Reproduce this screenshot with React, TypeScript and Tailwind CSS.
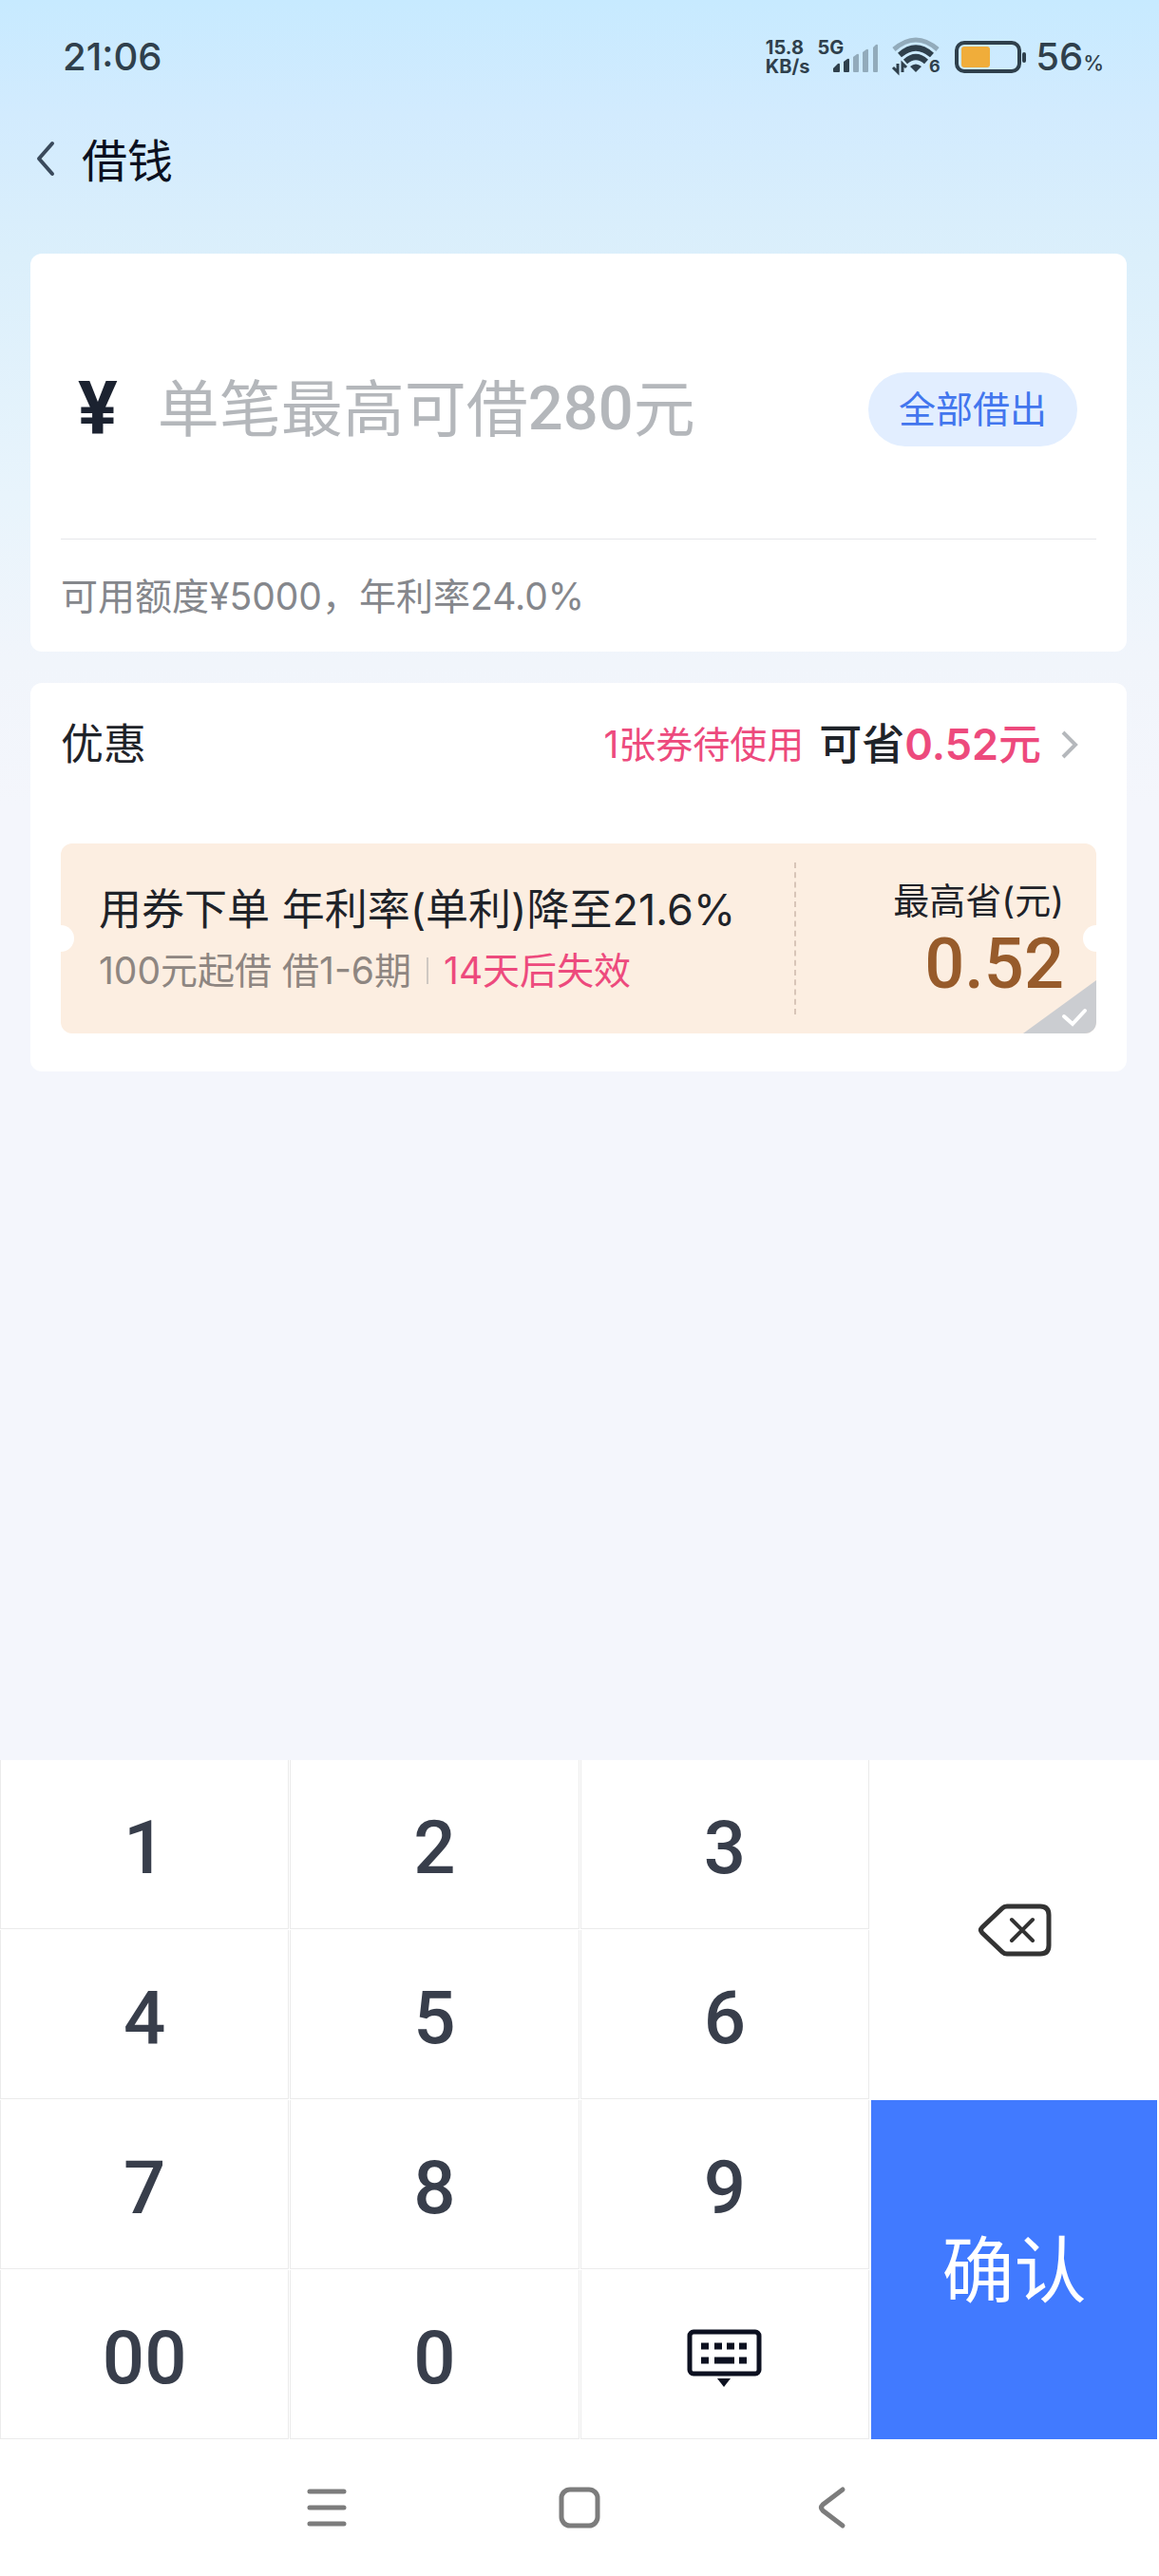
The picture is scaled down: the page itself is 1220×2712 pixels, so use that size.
import { ReactNode, useState } from 'react';

const KEYS = ['1', '2', '3', '4', '5', '6', '7', '8', '9', '00', '0'];

function SignalIcon() {
  return (
    <svg width="50" height="34" viewBox="0 0 50 34" aria-hidden="true">
      <path d="M1 32v-3l5-5q2-1 2 1v7q0 1-1 1H2q-1 0-1-1z" fill="#2f404c" />
      <path d="M12 32V22l4-3q2-1 2 1v12q0 1-1 1h-4q-1 0-1-1z" fill="#2f404c" />
      <path d="M22 32V17l4-3q2-1 2 1v17q0 1-1 1h-4q-1 0-1-1z" fill="#92abbb" />
      <path d="M32 32V12l4-3q2-1 2 1v22q0 1-1 1h-4q-1 0-1-1z" fill="#92abbb" />
      <path d="M43 32V7l3-3q2-1 2 1v27q0 1-1 1h-3q-1 0-1-1z" fill="#92abbb" />
    </svg>
  );
}

function WifiIcon() {
  return (
    <svg width="54" height="44" viewBox="0 0 54 44" fill="none" aria-hidden="true">
      <path d="M3 14Q26 -6 49 14" stroke="#92abbb" strokeWidth="5" />
      <path d="M9 20Q26 5 43 20" stroke="#2f404c" strokeWidth="6" />
      <path d="M15 27Q26 17 37 27" stroke="#2f404c" strokeWidth="6" />
      <path d="M20 32q6-5 12 0l-6 6z" fill="#2f404c" />
      <path d="M7 29v9l-5-5M12 38v-9l4 4" stroke="#2f404c" strokeWidth="3" />
      <text x="40" y="38" fontSize="18" fontWeight="700" fontFamily="Inter, sans-serif" fill="#2f404c">6</text>
    </svg>
  );
}

function BatteryIcon() {
  return (
    <svg width="78" height="34" viewBox="0 0 78 34" fill="none" aria-hidden="true">
      <rect x="3" y="2" width="66" height="30" rx="8" stroke="#2f404c" strokeWidth="4" />
      <rect x="8" y="6" width="30" height="22" rx="3" fill="#f0ad3a" />
      <rect x="72" y="12" width="4" height="11" rx="2" fill="#2f404c" />
    </svg>
  );
}

function StatusBar() {
  return (
    <div className="flex h-[120px] items-center justify-between pr-[58px] pl-[66px] font-[Inter,sans-serif] text-[#2f404c]">
      <span className="text-[40px] leading-none font-medium">21:06</span>
      <div className="flex items-center">
        <div className="flex items-start">
          <div className="text-[20px] leading-5 font-bold">
            <div>15.8</div>
            <div>KB/s</div>
          </div>
          <span className="ml-2 text-[20px] leading-5 font-bold">5G</span>
        </div>
        <div className="-ml-3">
          <SignalIcon />
        </div>
        <div className="ml-3">
          <WifiIcon />
        </div>
        <div className="ml-3">
          <BatteryIcon />
        </div>
        <div className="ml-2 flex items-baseline leading-none font-medium">
          <span className="text-[40px]">56</span>
          <span className="text-[22px]">%</span>
        </div>
      </div>
    </div>
  );
}

function Header() {
  return (
    <header className="flex h-[99px] items-center pl-[38px]">
      <button type="button" aria-label="返回" className="pb-1">
        <svg width="20" height="40" viewBox="0 0 20 40" fill="none" aria-hidden="true">
          <path d="M17 3L3 19L17 35" stroke="#3a4a5c" strokeWidth="4" strokeLinecap="round" strokeLinejoin="round" />
        </svg>
      </button>
      <h1 className="ml-7 text-[48px] leading-none text-[#0b1020]">借钱</h1>
    </header>
  );
}

function AmountCard() {
  const [amount, setAmount] = useState('');

  return (
    <section className="rounded-xl bg-white px-8">
      <div className="flex h-[301px] items-center border-b border-[#e6e7ea] pt-7 pr-5 pl-[18px]">
        <span className="font-[Roboto,sans-serif] text-[78px] leading-none font-bold text-[#1b2230]">¥</span>
        <div className="relative ml-[42px] flex-1">
          <input
            id="amount"
            inputMode="numeric"
            value={amount}
            onChange={(e) => setAmount(e.target.value)}
            className="block h-24 w-full text-[65px] focus:outline-none"
          />
          {amount === '' && (
            <label htmlFor="amount" className="absolute inset-0 flex items-center text-[65px] whitespace-nowrap text-[#b4b7bb]">
              单笔最高可借
              <span className="font-[Roboto,sans-serif] font-medium">280</span>
              元
            </label>
          )}
        </div>
        <button type="button" className="h-[78px] shrink-0 rounded-full bg-[#e2eeff] px-8 text-[39px] text-[#4276ee]">
          全部借出
        </button>
      </div>
      <p className="flex h-[118px] items-center pt-0.5 text-[39px] text-[#85878c]">
        可用额度¥5000，年利率24.0%
      </p>
    </section>
  );
}

function Coupon() {
  const [checked, setChecked] = useState(false);

  return (
    <label className="relative mt-[41px] flex h-[200px] overflow-hidden rounded-xl bg-[#fceee1]">
      <span className="absolute top-1/2 -left-3.5 size-7 -translate-y-1/2 rounded-full bg-white" />
      <span className="absolute top-1/2 -right-3.5 size-7 -translate-y-1/2 rounded-full bg-white" />
      <span className="flex flex-1 flex-col justify-center gap-2 pt-1 pl-10 whitespace-nowrap">
        <span className="text-[45px] leading-[56px] text-[#1f2329]">用券下单 年利率(单利)降至21.6%</span>
        <span className="flex items-center text-[39px] leading-[56px] text-[#8e8681]">
          100元起借 借1-6期
          <span className="mx-4 h-7 w-0.5 bg-[#cfc8c2]" />
          <span className="text-[#ed4a7d]">14天后失效</span>
        </span>
      </span>
      <span className="my-5 w-0 border-l-2 border-dashed border-[#d8c5b8]" />
      <span className="flex w-[316px] flex-col items-end pt-8 pr-[34px]">
        <span className="text-[38px] leading-[56px] text-[#1f2329]">最高省(元)</span>
        <span className="font-[Roboto,sans-serif] text-[74px] leading-[78px] font-medium text-[#975b2b]">0.52</span>
      </span>
      <input
        type="checkbox"
        aria-label="使用优惠券"
        checked={checked}
        onChange={() => setChecked(!checked)}
        className="absolute right-0 bottom-0 h-14 w-[77px] appearance-none"
      />
      <svg className="pointer-events-none absolute right-0 bottom-0" width="77" height="56" viewBox="0 0 77 56" fill="none" aria-hidden="true">
        <path d="M77 0V56H0z" fill="#cbcdd1" />
        <path d="M43 38l9 8l13-14" stroke="#fff" strokeWidth="4" strokeLinecap="round" />
      </svg>
    </label>
  );
}

function DiscountCard() {
  return (
    <section className="mt-[33px] rounded-xl bg-white px-8 pb-10">
      <div className="flex h-[128px] items-center justify-between pt-0.5 pr-[18px]">
        <h2 className="text-[45px] text-[#1f2329]">优惠</h2>
        <button type="button" className="flex items-center text-[#ed4a7d]">
          <span className="text-[39px]">1张券待使用</span>
          <span className="ml-4 text-[45px] font-medium">
            <span className="text-[#1f2329]">可省</span>
            <span className="font-semibold">0.52</span>
            元
          </span>
          <svg className="ml-5" width="20" height="34" viewBox="0 0 20 34" fill="none" aria-hidden="true">
            <path d="M3 4L16 17L3 30" stroke="#b5b8bc" strokeWidth="4" />
          </svg>
        </button>
      </div>
      <Coupon />
    </section>
  );
}

function Key({ label, children }: { label?: string, children: ReactNode }) {
  return (
    <button
      type="button"
      aria-label={label}
      className="flex items-center justify-center border-x border-b border-[#ebebeb] bg-white pt-2 font-[Roboto,sans-serif] text-[78px] leading-none font-medium text-[#383e4b]"
    >
      {children}
    </button>
  );
}

function Keypad() {
  return (
    <div className="mt-auto grid grid-cols-4 bg-white">
      <div className="col-span-3 grid auto-rows-[178px] grid-cols-3 gap-px">
        {KEYS.map((key) => (
          <Key key={key}>{key}</Key>
        ))}
        <Key label="收起键盘">
          <svg width="80" height="62" viewBox="0 0 80 62" fill="none" aria-hidden="true">
            <rect x="3" y="3" width="73" height="44" rx="4" stroke="#0c1020" strokeWidth="5" />
            <path d="M15 18h8M29 18h8M42 18h8M55 18h8M15 33h8M29 33h21M55 33h8" stroke="#0c1020" strokeWidth="7" />
            <path d="M32 52h14l-7 9z" fill="#0c1020" />
          </svg>
        </Key>
      </div>
      <div className="grid grid-rows-2">
        <button type="button" aria-label="删除" className="flex items-center justify-center bg-white">
          <svg width="78" height="58" viewBox="0 0 78 58" fill="none" aria-hidden="true">
            <path
              d="M31 4H66Q75 4 75 13V45Q75 54 66 54H31Q28 54 26 52L5 32Q2 29 5 26L26 6Q28 4 31 4z"
              stroke="#333"
              strokeWidth="5"
            />
            <path d="M36 18L58 40M58 18L36 40" stroke="#333" strokeWidth="4" strokeLinecap="round" />
          </svg>
        </button>
        <button type="button" className="mx-0.5 bg-[#417aff] pt-0.5 text-[76px] text-white">
          确认
        </button>
      </div>
    </div>
  );
}

function SystemNav() {
  return (
    <nav className="flex h-[144px] items-center justify-center gap-[218px] bg-white">
      <button type="button" aria-label="最近任务">
        <svg width="48" height="48" viewBox="0 0 48 48" fill="none" aria-hidden="true">
          <path d="M6 7H42M6 24H42M6 41H42" stroke="#7c7c7c" strokeWidth="5" strokeLinecap="round" />
        </svg>
      </button>
      <button type="button" aria-label="主屏幕">
        <svg width="48" height="48" viewBox="0 0 48 48" fill="none" aria-hidden="true">
          <rect x="5" y="5" width="38" height="38" rx="9" stroke="#7c7c7c" strokeWidth="5" />
        </svg>
      </button>
      <button type="button" aria-label="后退">
        <svg width="48" height="48" viewBox="0 0 48 48" fill="none" aria-hidden="true">
          <path d="M35 5L14 21Q11 24 14 27L35 43" stroke="#7c7c7c" strokeWidth="5" strokeLinecap="round" />
        </svg>
      </button>
    </nav>
  );
}

export default function App() {
  return (
    <div className="flex min-h-screen flex-col bg-[#f4f6fc] bg-[linear-gradient(#c7eaff_0px,#d2ebfe_120px,#dbeffb_270px,#e8f4fc_520px,#f1f5fb_700px,#f4f6fc_850px)] font-[Inter,'Noto_Sans_CJK_SC',sans-serif]">
      <StatusBar />
      <Header />
      <main className="mt-12 mb-10 pr-[34px] pl-8">
        <AmountCard />
        <DiscountCard />
      </main>
      <Keypad />
      <SystemNav />
    </div>
  );
}
